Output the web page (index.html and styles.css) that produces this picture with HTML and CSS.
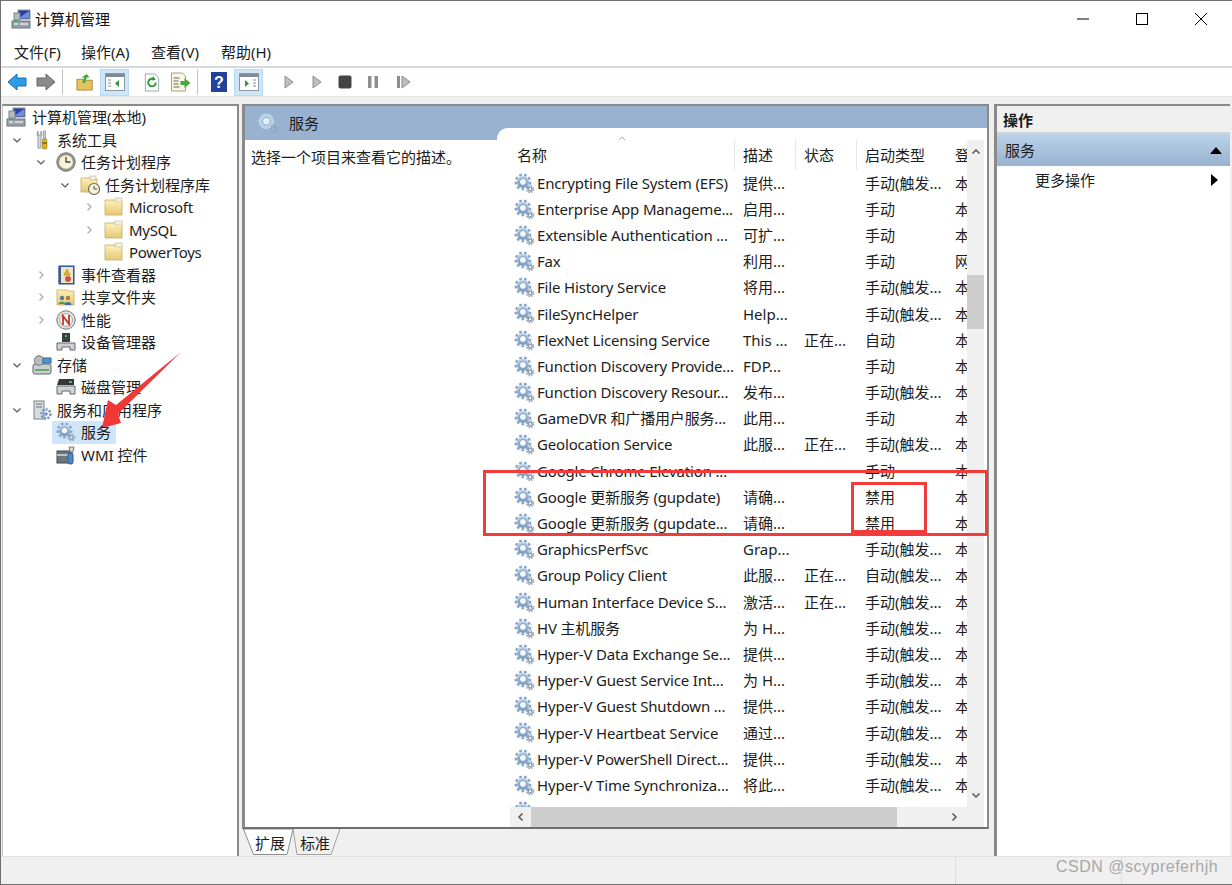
FILE: index.html
```html
<!DOCTYPE html>
<html lang="zh-CN">
<head>
<meta charset="utf-8">
<title>计算机管理</title>
<link rel="stylesheet" href="styles.css">
</head>
<body>
<svg class="defs" width="0" height="0">
  <defs>
    <linearGradient id="gb" x1="0" y1="0" x2="0" y2="1"><stop offset="0" stop-color="#c3d8ee"/><stop offset="1" stop-color="#7497bf"/></linearGradient>
    <linearGradient id="fo" x1="0" y1="0" x2="0" y2="1"><stop offset="0" stop-color="#fdf0b8"/><stop offset="1" stop-color="#e6c877"/></linearGradient>
    <symbol id="gear" viewBox="0 0 20 20">
      <circle cx="8.500" cy="8.500" r="6.800" fill="none" stroke="#88a6c8" stroke-width="2.400" stroke-dasharray="2.600 2.100"/>
      <circle cx="8.500" cy="8.500" r="5.800" fill="url(#gb)"/>
      <circle cx="8.500" cy="8.500" r="3.300" fill="#f6f9fc" stroke="#5f83ad" stroke-width=".7"/>
      <circle cx="15.400" cy="15.400" r="3.300" fill="none" stroke="#9aa8b8" stroke-width="1.500" stroke-dasharray="1.400 1.200"/>
      <circle cx="15.400" cy="15.400" r="2.500" fill="#8ea1b5"/>
      <circle cx="15.400" cy="15.400" r="1" fill="#fff"/>
    </symbol>
    <symbol id="gearfaint" viewBox="0 0 20 20">
      <circle cx="8.500" cy="8.500" r="5.600" fill="none" stroke="#b9d3ea" stroke-width="3"/>
      <circle cx="8.500" cy="8.500" r="3" fill="#e4eef7"/>
      <circle cx="15.200" cy="15.200" r="2.800" fill="none" stroke="#8ea0b4" stroke-width="1.600" stroke-dasharray="1.400 1.200"/>
    </symbol>
    <symbol id="chevd" viewBox="0 0 10 10"><path d="M1.500 3.500 5 7 8.500 3.500" fill="none" stroke="#555" stroke-width="1.200"/></symbol>
    <symbol id="chevr" viewBox="0 0 10 10"><path d="M3.500 1.500 7 5 3.500 8.500" fill="none" stroke="#aaa" stroke-width="1.200"/></symbol>
    <symbol id="computer" viewBox="0 0 20 20">
      <rect x="7" y="1" width="12" height="9" fill="#2b3f9e" stroke="#8d97a5"/>
      <path d="M8 9 18 2v7z" fill="#6d8fe0"/>
      <rect x="3" y="4" width="6" height="7" fill="#b3bcc5" stroke="#7a838c"/>
      <rect x="1" y="12" width="18" height="7" fill="#9aa2a9" stroke="#6d747a"/>
      <path d="M3 15h4M9 15h8" stroke="#dfe3e6" stroke-width="1.400"/>
      <rect x="3" y="11" width="3" height="2" fill="#3cae4a"/>
    </symbol>
    <symbol id="tools" viewBox="0 0 20 20">
      <path d="M6 1 5 5l1 2v11h3V7l1-2-1-4v4H6z" fill="#d6dadd" stroke="#7d858c" stroke-width=".8"/>
      <rect x="11.500" y="1" width="2" height="8" fill="#c6cbd0" stroke="#7d858c" stroke-width=".6"/>
      <rect x="10.500" y="9" width="4.400" height="10" rx="1" fill="#e4b117" stroke="#8f6f0a" stroke-width=".6"/>
      <path d="M10.500 13h4.400" stroke="#333"/>
    </symbol>
    <symbol id="clock" viewBox="0 0 20 20">
      <circle cx="10" cy="10" r="9.200" fill="#9a9a92" stroke="#6f6f68"/>
      <circle cx="10" cy="10" r="6.800" fill="#f8f3d8"/>
      <path d="M10 5v5h4.500" fill="none" stroke="#444" stroke-width="1.300"/>
    </symbol>
    <symbol id="folder" viewBox="0 0 20 20">
      <path d="M1 3h10l1 1h6v14H1z" fill="url(#fo)" stroke="#c9ab62" stroke-width=".8"/>
      <path d="M11 1h7v4h-7z" fill="#f4f0e2" stroke="#bcb28f" stroke-width=".6"/>
      <path d="M1 6h17" stroke="#f9ecb4"/>
    </symbol>
    <symbol id="fclock" viewBox="0 0 20 20">
      <path d="M1 3h10l1 1h5v13H1z" fill="url(#fo)" stroke="#c9ab62" stroke-width=".8"/>
      <path d="M10 1h6v4h-6z" fill="#f4f0e2" stroke="#bcb28f" stroke-width=".6"/>
      <circle cx="14" cy="14" r="5.500" fill="#f8f3d8" stroke="#6f6f68" stroke-width="1.200"/>
      <path d="M14 11v3h3" fill="none" stroke="#444"/>
    </symbol>
    <symbol id="event" viewBox="0 0 20 20">
      <rect x="3" y="1" width="15" height="18" fill="#3d6cb0" stroke="#27497c"/>
      <rect x="5" y="2" width="12" height="16" fill="#eee6c6"/>
      <path d="M2 4h3M2 7h3M2 10h3M2 13h3M2 16h3" stroke="#555"/>
      <path d="M11 4 14 10H8z" fill="#e8b81a" stroke="#8f6f0a" stroke-width=".5"/>
      <circle cx="12" cy="14" r="3" fill="#c9534f"/>
    </symbol>
    <symbol id="share" viewBox="0 0 20 20">
      <path d="M1 3h10l1 1h6v14H1z" fill="url(#fo)" stroke="#c9ab62" stroke-width=".8"/>
      <circle cx="6" cy="11" r="2.200" fill="#5279a8"/>
      <path d="M2.500 17c0-3 7-3 7 0z" fill="#4a9a5c"/>
      <circle cx="12" cy="11" r="2.200" fill="#a97c3a"/>
      <path d="M8.500 18c0-4 7-4 7 0z" fill="#3e6fa8"/>
    </symbol>
    <symbol id="perf" viewBox="0 0 20 20">
      <circle cx="10" cy="10" r="9.200" fill="#e2e2dc" stroke="#77777a"/>
      <circle cx="10" cy="10" r="6.400" fill="#fbfbf6" stroke="#a4a4a0"/>
      <path d="M7 15 7 6l6 8V5" fill="none" stroke="#c2332e" stroke-width="1.800"/>
    </symbol>
    <symbol id="device" viewBox="0 0 20 20">
      <rect x="6" y="1" width="8" height="9" fill="#3a3f43"/>
      <rect x="9" y="3" width="2" height="2" fill="#4fc25a"/>
      <path d="M1 11h18v7h-5v-3H6v3H1z" fill="#ced1d3" stroke="#64696d"/>
    </symbol>
    <symbol id="storage" viewBox="0 0 20 20">
      <rect x="1" y="9" width="18" height="10" rx="2" fill="#c9ced1" stroke="#5f666b"/>
      <rect x="3" y="14" width="14" height="2" fill="#6aa86e"/>
      <circle cx="7" cy="5.500" r="4.800" fill="#b6bcbe" stroke="#777"/>
      <rect x="11" y="3" width="8" height="5" fill="#4f97d4" stroke="#2f6697"/>
    </symbol>
    <symbol id="disk" viewBox="0 0 20 20">
      <path d="M3 2h15v6H1z" fill="#34383c"/>
      <rect x="13" y="4" width="3" height="2" fill="#4fc25a"/>
      <path d="M1 9h18v8h-5v-3H6v3H1z" fill="#d0d3d5" stroke="#64696d"/>
    </symbol>
    <symbol id="servapp" viewBox="0 0 20 20">
      <rect x="2" y="1" width="10" height="18" fill="#d8dcdf" stroke="#7b8287"/>
      <path d="M4 4h6M4 7h6" stroke="#6b7278"/>
      <circle cx="14" cy="14" r="4.400" fill="none" stroke="#6b94c2" stroke-width="2.600" stroke-dasharray="2 1.300"/>
      <circle cx="14" cy="14" r="1.800" fill="#6b94c2"/>
    </symbol>
    <symbol id="wmi" viewBox="0 0 20 20">
      <rect x="1" y="6" width="15" height="12" fill="#6f777d" stroke="#43494d"/>
      <path d="M1 10h15" stroke="#dfe2e4" stroke-width="1.400"/>
      <rect x="12" y="8" width="5" height="11" rx="2" fill="#4e88c6" stroke="#2d5e92"/>
      <path d="M13 2l5 0-1 5h-3z" fill="#d6dadd" stroke="#71787d"/>
    </symbol>
  </defs>
</svg>

<div class="window">
  <header class="titlebar">
    <svg class="ticon"><use href="#computer"/></svg>
    <span class="title">计算机管理</span>
    <div class="winbtns">
      <svg class="wb" viewBox="0 0 14 14"><path d="M1 7h12" stroke="#000"/></svg>
      <svg class="wb" viewBox="0 0 14 14"><rect x="1.500" y="1.500" width="11" height="11" fill="none" stroke="#000"/></svg>
      <svg class="wb" viewBox="0 0 14 14"><path d="M1 1 13 13M13 1 1 13" stroke="#000"/></svg>
    </div>
  </header>
  <nav class="menubar">
    <span>文件(F)</span><span>操作(A)</span><span>查看(V)</span><span>帮助(H)</span>
  </nav>
  <div class="toolbar">
    <svg class="tb t-a" viewBox="0 0 20 18"><path d="M1 9 10 1v4h9v8h-9v4z" fill="#2e9be6" stroke="#1c6fb0"/></svg>
    <svg class="tb t-a" viewBox="0 0 20 18"><path d="M19 9 10 1v4H1v8h9v4z" fill="#8a8a8a" stroke="#666"/></svg>
    <i class="sep"></i>
    <svg class="tb t-b" viewBox="0 0 20 20"><path d="M1 7h7l1 1h9v11H1z" fill="#e4c25c" stroke="#a88a2c"/><path d="M7 11 9 5 6 5 12 1l3 4h-3l-2 6z" fill="#3fa83f"/></svg>
    <span class="hl"><svg class="tb2" viewBox="0 0 20 18"><rect x=".5" y=".5" width="19" height="17" fill="#fff" stroke="#8b97a3"/><rect x="1" y="1" width="18" height="3" fill="#7f8a95"/><path d="M3 7h3M3 10h3M3 13h3" stroke="#7a8a9a"/><path d="M14 7v7l-4-3.500z" fill="#2d9a3a"/></svg></span>
    <svg class="tb t-c" viewBox="0 0 16 20"><path d="M1 1h10l4 4v14H1z" fill="#fff" stroke="#9aa2a9"/><path d="M12 10a4 4 0 1 1-2-3.400" fill="none" stroke="#2d9a3a" stroke-width="2"/><path d="M9 3l3 4-4 1z" fill="#2d9a3a"/></svg>
    <svg class="tb t-d" viewBox="0 0 20 20"><path d="M1 1h11l3 3v15H1z" fill="#fbf6df" stroke="#a4a08c"/><path d="M3 6h6M3 9h5M3 12h5M3 15h6" stroke="#666"/><path d="M10 9h4V6l6 5-6 5v-3h-4z" fill="#49a83f"/></svg>
    <i class="sep"></i>
    <svg class="tb t-e" viewBox="0 0 16 20"><rect width="16" height="20" fill="#23419c"/><text x="8" y="16" class="qm">?</text></svg>
    <span class="hl"><svg class="tb2" viewBox="0 0 20 18"><rect x=".5" y=".5" width="19" height="17" fill="#fff" stroke="#8b97a3"/><rect x="1" y="1" width="18" height="3" fill="#7f8a95"/><path d="M14 7h3M14 10h3M14 13h3" stroke="#7a8a9a"/><path d="M6 7v7l4-3.500z" fill="#2d9a3a"/></svg></span>
    <svg class="tb t-f" viewBox="0 0 10 14"><path d="M1 1 9 7 1 13z" fill="#bfbfbf" stroke="#8c8c8c"/></svg>
    <svg class="tb t-g" viewBox="0 0 10 14"><path d="M1 1 9 7 1 13z" fill="#bfbfbf" stroke="#8c8c8c"/></svg>
    <svg class="tb t-h" viewBox="0 0 14 14"><rect x=".5" y=".5" width="13" height="13" rx="2" fill="#444"/></svg>
    <svg class="tb t-i" viewBox="0 0 12 14"><rect x="1" y="1" width="3.500" height="12" fill="#8f8f8f"/><rect x="7.500" y="1" width="3.500" height="12" fill="#8f8f8f"/></svg>
    <svg class="tb t-j" viewBox="0 0 15 14"><rect x="1" y="1" width="3" height="12" fill="#8f8f8f"/><path d="M6 1l8 6-8 6z" fill="#bfbfbf" stroke="#8c8c8c"/></svg>
  </div>

  <main class="panes">
    <aside class="tree">
      <div class="tr l0"><svg class="ic"><use href="#computer"/></svg><span>计算机管理(本地)</span></div>
      <div class="tr l1"><svg class="ch"><use href="#chevd"/></svg><svg class="ic"><use href="#tools"/></svg><span>系统工具</span></div>
      <div class="tr l2"><svg class="ch"><use href="#chevd"/></svg><svg class="ic"><use href="#clock"/></svg><span>任务计划程序</span></div>
      <div class="tr l3"><svg class="ch"><use href="#chevd"/></svg><svg class="ic"><use href="#fclock"/></svg><span>任务计划程序库</span></div>
      <div class="tr l4"><svg class="ch"><use href="#chevr"/></svg><svg class="ic"><use href="#folder"/></svg><span class="lat">Microsoft</span></div>
      <div class="tr l4"><svg class="ch"><use href="#chevr"/></svg><svg class="ic"><use href="#folder"/></svg><span class="lat">MySQL</span></div>
      <div class="tr l4"><i class="ch"></i><svg class="ic"><use href="#folder"/></svg><span class="lat">PowerToys</span></div>
      <div class="tr l2"><svg class="ch"><use href="#chevr"/></svg><svg class="ic"><use href="#event"/></svg><span>事件查看器</span></div>
      <div class="tr l2"><svg class="ch"><use href="#chevr"/></svg><svg class="ic"><use href="#share"/></svg><span>共享文件夹</span></div>
      <div class="tr l2"><svg class="ch"><use href="#chevr"/></svg><svg class="ic"><use href="#perf"/></svg><span>性能</span></div>
      <div class="tr l2"><i class="ch"></i><svg class="ic"><use href="#device"/></svg><span>设备管理器</span></div>
      <div class="tr l1"><svg class="ch"><use href="#chevd"/></svg><svg class="ic"><use href="#storage"/></svg><span>存储</span></div>
      <div class="tr l2"><i class="ch"></i><svg class="ic"><use href="#disk"/></svg><span>磁盘管理</span></div>
      <div class="tr l1"><svg class="ch"><use href="#chevd"/></svg><svg class="ic"><use href="#servapp"/></svg><span>服务和应用程序</span></div>
      <div class="tr l2 sel"><i class="ch"></i><svg class="ic"><use href="#gear"/></svg><span>服务</span></div>
      <div class="tr l2"><i class="ch"></i><svg class="ic"><use href="#wmi"/></svg><span>WMI 控件</span></div>
    </aside>

    <section class="centerwrap">
      <div class="center">
        <div class="desccol">
          <div class="band"><svg class="bandic"><use href="#gearfaint"/></svg><span>服务</span></div>
          <p class="desc">选择一个项目来查看它的描述。</p>
        </div>
        <div class="listcol">
          <div class="listview">
            <div class="lhead">
              <span class="c1">名称<svg class="sort" viewBox="0 0 8 5"><path d="M1 4 4 1l3 3" fill="none" stroke="#aaa"/></svg></span>
              <span class="c2 hc">描述</span><span class="c3 hc">状态</span><span class="c4 hc">启动类型</span><span class="c5 hc">登</span>
            </div>
            <div class="r"><svg class="g"><use href="#gear"/></svg><span class="c1">Encrypting File System (EFS)</span><span class="c2">提供...</span><span class="c3"></span><span class="c4">手动(触发...</span><span class="c5">本</span></div>
            <div class="r"><svg class="g"><use href="#gear"/></svg><span class="c1">Enterprise App Manageme...</span><span class="c2">启用...</span><span class="c3"></span><span class="c4">手动</span><span class="c5">本</span></div>
            <div class="r"><svg class="g"><use href="#gear"/></svg><span class="c1">Extensible Authentication ...</span><span class="c2">可扩...</span><span class="c3"></span><span class="c4">手动</span><span class="c5">本</span></div>
            <div class="r"><svg class="g"><use href="#gear"/></svg><span class="c1">Fax</span><span class="c2">利用...</span><span class="c3"></span><span class="c4">手动</span><span class="c5">网</span></div>
            <div class="r"><svg class="g"><use href="#gear"/></svg><span class="c1">File History Service</span><span class="c2">将用...</span><span class="c3"></span><span class="c4">手动(触发...</span><span class="c5">本</span></div>
            <div class="r"><svg class="g"><use href="#gear"/></svg><span class="c1">FileSyncHelper</span><span class="c2">Help...</span><span class="c3"></span><span class="c4">手动(触发...</span><span class="c5">本</span></div>
            <div class="r"><svg class="g"><use href="#gear"/></svg><span class="c1">FlexNet Licensing Service</span><span class="c2">This ...</span><span class="c3">正在...</span><span class="c4">自动</span><span class="c5">本</span></div>
            <div class="r"><svg class="g"><use href="#gear"/></svg><span class="c1">Function Discovery Provide...</span><span class="c2">FDP...</span><span class="c3"></span><span class="c4">手动</span><span class="c5">本</span></div>
            <div class="r"><svg class="g"><use href="#gear"/></svg><span class="c1">Function Discovery Resour...</span><span class="c2">发布...</span><span class="c3"></span><span class="c4">手动(触发...</span><span class="c5">本</span></div>
            <div class="r"><svg class="g"><use href="#gear"/></svg><span class="c1">GameDVR 和广播用户服务...</span><span class="c2">此用...</span><span class="c3"></span><span class="c4">手动</span><span class="c5">本</span></div>
            <div class="r"><svg class="g"><use href="#gear"/></svg><span class="c1">Geolocation Service</span><span class="c2">此服...</span><span class="c3">正在...</span><span class="c4">手动(触发...</span><span class="c5">本</span></div>
            <div class="r"><svg class="g"><use href="#gear"/></svg><span class="c1">Google Chrome Elevation ...</span><span class="c2"></span><span class="c3"></span><span class="c4">手动</span><span class="c5">本</span></div>
            <div class="r"><svg class="g"><use href="#gear"/></svg><span class="c1">Google 更新服务 (gupdate)</span><span class="c2">请确...</span><span class="c3"></span><span class="c4">禁用</span><span class="c5">本</span></div>
            <div class="r"><svg class="g"><use href="#gear"/></svg><span class="c1">Google 更新服务 (gupdate...</span><span class="c2">请确...</span><span class="c3"></span><span class="c4">禁用</span><span class="c5">本</span></div>
            <div class="r"><svg class="g"><use href="#gear"/></svg><span class="c1">GraphicsPerfSvc</span><span class="c2">Grap...</span><span class="c3"></span><span class="c4">手动(触发...</span><span class="c5">本</span></div>
            <div class="r"><svg class="g"><use href="#gear"/></svg><span class="c1">Group Policy Client</span><span class="c2">此服...</span><span class="c3">正在...</span><span class="c4">自动(触发...</span><span class="c5">本</span></div>
            <div class="r"><svg class="g"><use href="#gear"/></svg><span class="c1">Human Interface Device S...</span><span class="c2">激活...</span><span class="c3">正在...</span><span class="c4">手动(触发...</span><span class="c5">本</span></div>
            <div class="r"><svg class="g"><use href="#gear"/></svg><span class="c1">HV 主机服务</span><span class="c2">为 H...</span><span class="c3"></span><span class="c4">手动(触发...</span><span class="c5">本</span></div>
            <div class="r"><svg class="g"><use href="#gear"/></svg><span class="c1">Hyper-V Data Exchange Se...</span><span class="c2">提供...</span><span class="c3"></span><span class="c4">手动(触发...</span><span class="c5">本</span></div>
            <div class="r"><svg class="g"><use href="#gear"/></svg><span class="c1">Hyper-V Guest Service Int...</span><span class="c2">为 H...</span><span class="c3"></span><span class="c4">手动(触发...</span><span class="c5">本</span></div>
            <div class="r"><svg class="g"><use href="#gear"/></svg><span class="c1">Hyper-V Guest Shutdown ...</span><span class="c2">提供...</span><span class="c3"></span><span class="c4">手动(触发...</span><span class="c5">本</span></div>
            <div class="r"><svg class="g"><use href="#gear"/></svg><span class="c1">Hyper-V Heartbeat Service</span><span class="c2">通过...</span><span class="c3"></span><span class="c4">手动(触发...</span><span class="c5">本</span></div>
            <div class="r"><svg class="g"><use href="#gear"/></svg><span class="c1">Hyper-V PowerShell Direct...</span><span class="c2">提供...</span><span class="c3"></span><span class="c4">手动(触发...</span><span class="c5">本</span></div>
            <div class="r"><svg class="g"><use href="#gear"/></svg><span class="c1">Hyper-V Time Synchroniza...</span><span class="c2">将此...</span><span class="c3"></span><span class="c4">手动(触发...</span><span class="c5">本</span></div>
            <div class="r"><svg class="g"><use href="#gear"/></svg><span class="c1">Hyper-V 卷影复制 Request...</span><span class="c2">协调...</span><span class="c3"></span><span class="c4">手动(触发...</span><span class="c5">本</span></div>
          </div>
          <div class="vscroll">
            <svg class="sa" viewBox="0 0 10 10"><path d="M1.500 6.500 5 3l3.500 3.500" fill="none" stroke="#555" stroke-width="1.500"/></svg>
            <div class="vthumb"></div>
            <svg class="sa sa-end" viewBox="0 0 10 10"><path d="M1.500 3.500 5 7l3.500-3.500" fill="none" stroke="#555" stroke-width="1.500"/></svg>
          </div>
          <div class="hscroll">
            <svg class="sh" viewBox="0 0 10 10"><path d="M6.500 1.500 3 5l3.500 3.500" fill="none" stroke="#555" stroke-width="1.500"/></svg>
            <div class="hthumb"></div>
            <svg class="sh" viewBox="0 0 10 10"><path d="M3.500 1.500 7 5 3.500 8.500" fill="none" stroke="#555" stroke-width="1.500"/></svg>
          </div>
          <div class="corner"></div>
        </div>
      </div>
      <div class="tabs">
        <svg class="tabshape" viewBox="0 0 100 28" width="100" height="28">
          <path d="M50 0 54 25.500H88L97 0" fill="#f0f0f0" stroke="#a0a0a0"/>
          <path d="M.5 0 10.500 25.500H44L50 0z" fill="#fff" stroke="#8d8d8d"/>
        </svg>
        <span class="tab tab1">扩展</span><span class="tab tab2">标准</span>
      </div>
    </section>

    <aside class="actions">
      <div class="ahead">操作</div>
      <div class="aband"><span>服务</span><svg class="tri" viewBox="0 0 12 7"><path d="M0 7 6 0l6 7z" fill="#000"/></svg></div>
      <div class="aitem"><span>更多操作</span><svg class="tri2" viewBox="0 0 7 12"><path d="M0 0 7 6 0 12z" fill="#000"/></svg></div>
    </aside>
  </main>

  <footer class="status"><i class="st1"></i><i class="st2"></i></footer>
</div>

<div class="redbox rb1"></div>
<div class="redbox rb2"></div>
<svg class="arrow" viewBox="0 0 90 80" width="90" height="80">
  <path d="M90 0 25 53 17 48 11 76 30 71 27 62z" fill="#f03838"/>
</svg>
<div class="mark">CSDN @scypreferhjh</div>
</body>
</html>
```

FILE: styles.css
```css
* { box-sizing: border-box; }
html, body { margin: 0; padding: 0; width: 1232px; height: 885px; overflow: hidden; background: #f0f0f0; }
body { position: relative; font: 15px/20px "Noto Sans", "Noto Sans CJK SC", sans-serif; color: #1c1c1c; }
.defs { position: absolute; }
svg { display: block; flex: none; }

.window { display: flex; flex-direction: column; width: 1232px; height: 885px; border: 1px solid #707070; border-width: 1px 0 1px 1px; }

.titlebar { display: flex; align-items: center; height: 37px; padding: 0 0 1px 10px; background: #fff; }
.ticon { width: 20px; height: 20px; }
.title { margin-left: 4px; color: #111; }
.winbtns { display: flex; margin-left: auto; }
.wb { width: 14px; height: 14px; margin: 0 22.5px; }
.winbtns .wb:last-child { margin-right: 24px; }

.menubar { display: flex; align-items: center; height: 28px; padding-left: 13px; background: #fff; }
.menubar span { width: 70px; }
.menubar span:first-child { width: 67px; }

.toolbar { display: flex; align-items: center; height: 30px; padding-left: 6px; background: #fff; border-top: 2px solid #d3d9df; }
.tb { height: 18px; }
.t-a { width: 20px; margin-right: 9px; }
.t-a + .sep { margin-left: -3px; }
.sep { display: block; width: 1px; height: 26px; background: #c4c4c4; margin: 0 13px 0 0; }
.t-b { width: 18px; margin-right: 6px; }
.hl { display: flex; align-items: center; justify-content: center; width: 29px; height: 27px; background: #cfe6f9; border: 1px solid #b8dbf5; }
.tb2 { width: 20px; height: 18px; }
.t-c { width: 16px; height: 19px; margin: 0 10px 0 15px; }
.t-d { width: 21px; height: 20px; margin-right: 6px; }
.t-e { width: 16px; height: 20px; margin-right: 7px; }
.qm { font: bold 16px "Liberation Sans", sans-serif; fill: #fff; text-anchor: middle; }
.t-f { width: 10px; height: 14px; margin: 0 18px 0 21px; }
.t-g { width: 10px; height: 14px; margin-right: 16px; }
.t-h { width: 14px; height: 14px; margin-right: 15px; }
.t-i { width: 12px; height: 14px; margin-right: 17px; }
.t-j { width: 15px; height: 14px; }

.panes { display: flex; flex: 1; min-height: 0; padding: 7px 0 0 1px; background: #f0f0f0; border-top: 1px solid #e4e4e4; }

.tree { width: 237px; padding: 0; background: #fff; border-top: 2px solid #8a8a8a; border-right: 2px solid #8a8a8a; border-left: 1px solid #c8c8c8; }
.tr { display: flex; align-items: center; height: 22.5px; white-space: nowrap; width: max-content; }
.l0 { padding-left: 3px; }
.l1 { padding-left: 6px; }
.l2 { padding-left: 30px; }
.l3 { padding-left: 54px; }
.l4 { padding-left: 78px; }
.lat { letter-spacing: -.3px; }
.ch { display: block; width: 16px; height: 10px; margin-right: 7px; }
.tr .ic { width: 20px; height: 20px; margin-right: 5px; }
.l0 .ic { margin-right: 6px; }
.sel { position: relative; }
.sel::before { content: ""; position: absolute; left: 49px; right: -5px; top: 0; bottom: 0; background: #cfe6fa; z-index: 0; }
.sel .ic, .sel span { position: relative; z-index: 1; }

.centerwrap { display: flex; flex-direction: column; width: 747px; margin-left: 3px; }
.center { flex: none; display: flex; height: 725px; background: #98b2d0; border: 2px solid #8a8a8a; border-left-width: 3px; border-bottom-color: #6e6e6e; }
.desccol { display: flex; flex-direction: column; width: 252px; }
.band { display: flex; align-items: center; height: 34px; padding-left: 12px; }
.bandic { width: 22px; height: 22px; margin-right: 10px; }
.desc { flex: 1; margin: 0; padding: 7px 0 0 6px; background: #fff; }
.listcol { flex: 1; display: grid; grid-template-columns: 457px 17px 1fr; grid-template-rows: 1fr 20px; margin-top: 22px; padding-left: 13px; background: #fff; border-top-left-radius: 11px; min-height: 0; }
.listview { grid-column: 1; grid-row: 1; overflow: hidden; padding-top: 12px; }
.lhead { display: flex; height: 29.5px; align-items: center; }
.r { display: flex; align-items: center; height: 26.2px; white-space: nowrap; position: relative; }
.r:last-child { padding-top: 6px; }
.g { position: absolute; left: 4px; top: 3px; width: 21px; height: 21px; }
.c1, .c2, .c3, .c4, .c5 { display: block; flex: none; white-space: nowrap; }
.c1 { width: 233px; padding-left: 27px; letter-spacing: -.17px; }
.c2 { width: 61px; }
.c3 { width: 61px; }
.c4 { width: 90px; }
.c5 { width: 12px; overflow: hidden; }
.lhead .c1 { padding-left: 7px; position: relative; letter-spacing: 0; }
.hc { position: relative; }
.hc::before { content: ""; position: absolute; left: -9px; top: -5px; bottom: -5px; width: 1px; background: #e6e6e6; }
.sort { position: absolute; left: 108px; top: -9px; width: 8px; height: 5px; }

.vscroll { grid-column: 2; grid-row: 1; display: flex; flex-direction: column; align-items: center; margin-top: 12px; background: #f0f0f0; position: relative; }
.sa { width: 10px; height: 10px; margin-top: 7px; }
.vthumb { width: 17px; height: 54px; margin-top: 118px; background: #cdcdcd; }
.sa-end { margin-top: auto; margin-bottom: 7px; }
.hscroll { grid-column: 1; grid-row: 2; display: flex; align-items: center; background: #f0f0f0; }
.sh { width: 10px; height: 10px; margin: 0 3px; }
.hscroll .sh:first-child { margin: 0 5px 0 6px; }
.hscroll .sh:last-child { margin-left: 52px; }
.hthumb { width: 366px; height: 20px; background: #cdcdcd; }
.corner { grid-column: 2; grid-row: 2; background: #f0f0f0; }

.tabs { display: flex; position: relative; height: 27px; padding-left: 13px; background: #f0f0f0; }
.tabshape { position: absolute; left: 1px; top: 0; }
.tab { position: relative; line-height: 28px; }
.tab2 { margin-left: 15px; }

.actions { width: 236px; margin-left: 5px; background: #fff; border-top: 2px solid #8a8a8a; border-left: 3px solid #8a8a8a; }
.ahead { height: 28px; line-height: 29px; padding-left: 6px; font-weight: 700; background: #f0f0f0; border-bottom: 2px solid #d4d4d4; }
.aband { display: flex; align-items: center; justify-content: space-between; height: 32px; padding: 0 8px; background: linear-gradient(#bad3ea, #98b2d0); }
.tri { width: 12px; height: 7px; }
.aitem { display: flex; align-items: center; justify-content: space-between; height: 28px; padding: 0 12px 0 38px; }
.tri2 { width: 7px; height: 12px; }

.status { display: flex; flex: none; height: 28px; background: #f0f0f0; border-top: 1px solid #e0e0e0; padding-left: 954px; }
.st1 { display: block; width: 1px; height: 27px; background: #dedede; }
.st2 { display: block; width: 1px; height: 27px; margin-left: 165px; background: #dedede; }

.redbox { position: absolute; border: 3px solid #f33b3b; }
.rb1 { left: 483px; top: 470px; width: 505px; height: 66px; }
.rb2 { left: 851px; top: 482px; width: 76px; height: 51px; }
.arrow { position: absolute; left: 91px; top: 352px; }
.mark { position: absolute; left: 1056px; top: 856px; font: 16px/22px "Liberation Sans", sans-serif; color: #a8a8a8; letter-spacing: .5px; }
```
